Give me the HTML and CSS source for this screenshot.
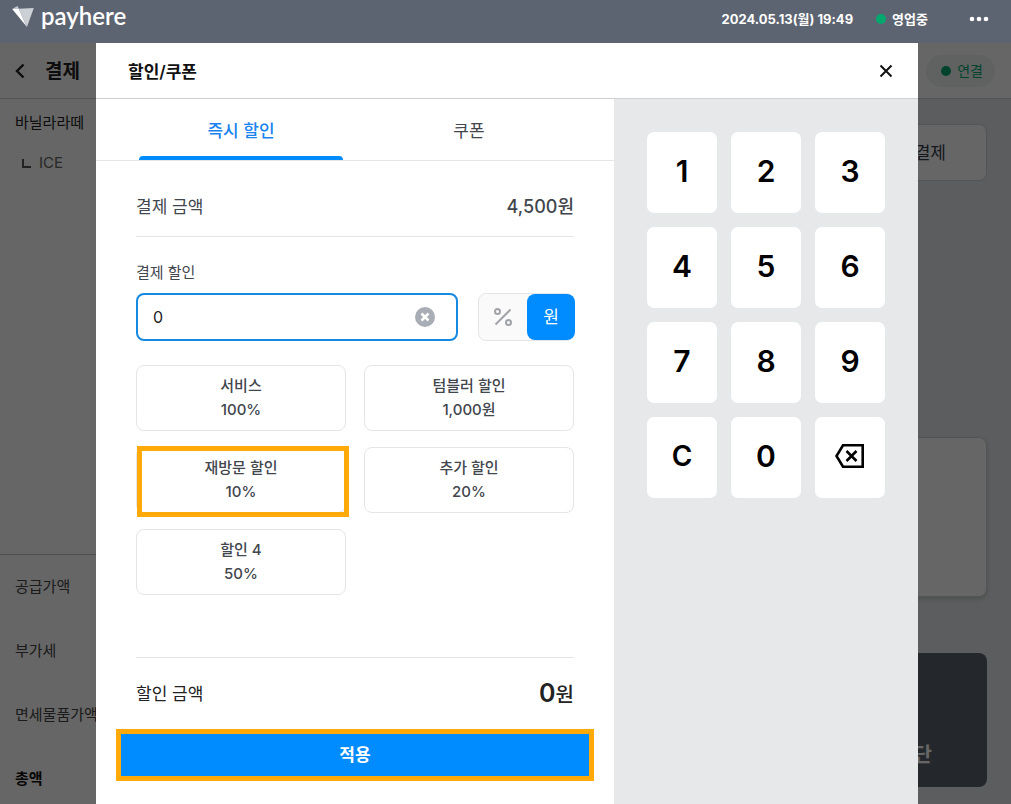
FILE: index.html
```
<!DOCTYPE html>
<html lang="ko">
<head>
    <meta charset="UTF-8">
    <meta name="viewport" content="width=device-width, initial-scale=1.0">
    <title>할인/쿠폰 - payhere</title>
    <link rel="stylesheet" href="styles.css">
</head>
<body>
    <header class="topbar">
        <div class="logo">
            <svg width="22" height="21" viewBox="0 0 66 64" aria-hidden="true">
                <path d="M0 9 16 0 21 8Z" fill="#c3c8ce"/>
                <path d="M0 9 20 8 45 64Z" fill="#fff"/>
                <path d="M20 8 66 6 45 64Z" fill="#ccd0d5"/>
            </svg>
            <span>payhere</span>
        </div>
        <div class="topbar-info">
            <span>2024.05.13(월) 19:49</span>
            <span class="status"><i class="dot"></i>영업중</span>
            <button class="icon-btn more" type="button" aria-label="더보기">
                <svg width="20" height="6" viewBox="0 0 20 6" fill="#fff">
                    <circle cx="3" cy="3" r="2.3"/>
                    <circle cx="10" cy="3" r="2.3"/>
                    <circle cx="17" cy="3" r="2.3"/>
                </svg>
            </button>
        </div>
    </header>

    <div class="stage">
        <!-- 결제 화면 -->
        <div class="page">
            <div class="page-header">
                <button class="icon-btn" type="button" aria-label="뒤로">
                    <svg width="10" height="16" viewBox="0 0 10 16" fill="none" stroke="#222" stroke-width="2.4">
                        <path d="M8.500 1.500 2 8l6.500 6.500"/>
                    </svg>
                </button>
                <h1>결제</h1>
                <span class="connect"><i class="dot"></i>연결</span>
            </div>
            <div class="page-body">
                <aside class="order">
                    <ul class="order-items">
                        <li>바닐라라떼</li>
                        <li class="option">
                            <svg width="9" height="9" viewBox="0 0 9 9" fill="none" stroke="#555" stroke-width="2">
                                <path d="M1 0v8h8"/>
                            </svg>
                            ICE
                        </li>
                    </ul>
                    <ul class="order-total">
                        <li>공급가액</li>
                        <li>부가세</li>
                        <li>면세물품가액</li>
                        <li class="sum">총액</li>
                    </ul>
                </aside>
                <main class="methods">
                    <div class="method">결제</div>
                    <div class="method method-large"></div>
                    <div class="method method-dark">단</div>
                </main>
            </div>
        </div>

        <!-- 할인/쿠폰 모달 -->
        <div class="backdrop">
            <section class="modal" role="dialog" aria-labelledby="modal-title">
                <div class="modal-header">
                    <h2 id="modal-title">할인/쿠폰</h2>
                    <button class="icon-btn" type="button" aria-label="닫기">
                        <svg width="14" height="14" viewBox="0 0 14 14" fill="none" stroke="#111" stroke-width="2">
                            <path d="M1.500 1.500l11 11M12.500 1.500l-11 11"/>
                        </svg>
                    </button>
                </div>
                <div class="modal-body">
                    <div class="discount">
                        <div class="tabs">
                            <button class="tab active" type="button">즉시 할인</button>
                            <button class="tab" type="button">쿠폰</button>
                        </div>
                        <div class="content">
                            <div class="amount-row">
                                <span>결제 금액</span>
                                <span class="amount">4,500원</span>
                            </div>
                            <label class="field-label" for="discount">결제 할인</label>
                            <div class="field-row">
                                <div class="field">
                                    <input id="discount" type="text" value="0">
                                    <button class="icon-btn" type="button" aria-label="지우기">
                                        <svg width="20" height="20" viewBox="0 0 20 20">
                                            <circle cx="10" cy="10" r="10" fill="#a9adb5"/>
                                            <path d="M6.500 6.500l7 7M13.500 6.500l-7 7" stroke="#fff" stroke-width="2.600"/>
                                        </svg>
                                    </button>
                                </div>
                                <div class="unit">
                                    <button type="button" aria-label="퍼센트">
                                        <svg width="18" height="18" viewBox="0 0 18 18" fill="none" stroke="#a0a3a8" stroke-width="2">
                                            <circle cx="3.500" cy="3.500" r="2.500"/>
                                            <circle cx="14.500" cy="14.500" r="2.500"/>
                                            <path d="M16.500 1.500l-15 15"/>
                                        </svg>
                                    </button>
                                    <button class="active" type="button">원</button>
                                </div>
                            </div>
                            <div class="presets">
                                <button class="preset" type="button">서비스<span>100%</span></button>
                                <button class="preset" type="button">텀블러 할인<span>1,000원</span></button>
                                <button class="preset marked" type="button">재방문 할인<span>10%</span></button>
                                <button class="preset" type="button">추가 할인<span>20%</span></button>
                                <button class="preset" type="button">할인 4<span>50%</span></button>
                            </div>
                        </div>
                        <div class="discount-footer">
                            <div class="total-row">
                                <span>할인 금액</span>
                                <strong>0<small>원</small></strong>
                            </div>
                            <button class="apply" type="button">적용</button>
                        </div>
                    </div>
                    <div class="keypad">
                        <button type="button">1</button>
                        <button type="button">2</button>
                        <button type="button">3</button>
                        <button type="button">4</button>
                        <button type="button">5</button>
                        <button type="button">6</button>
                        <button type="button">7</button>
                        <button type="button">8</button>
                        <button type="button">9</button>
                        <button class="clear" type="button">C</button>
                        <button type="button">0</button>
                        <button type="button" aria-label="삭제">
                            <svg width="30" height="24" viewBox="0 0 30 24" fill="none" stroke="#000" stroke-width="2.600">
                                <path d="M8 1.300H27.700V22.700H8L1.500 12Z"/>
                                <path d="M11.500 7l10 10M21.500 7l-10 10"/>
                            </svg>
                        </button>
                    </div>
                </div>
            </section>
        </div>
    </div>
</body>
</html>
```

FILE: styles.css
```
:root {
    --blue: #008cff;
    --orange: #ffaa08;
    --green: #00a870;
    --line: #e4e5e6;
    --gray-bg: #e6e8ea;
    --text: #42464d;
}

* {
    margin: 0;
    padding: 0;
    box-sizing: border-box;
}

body {
    min-height: 100vh;
    display: flex;
    flex-direction: column;
    font-family: Inter, "Noto Sans CJK KR", sans-serif;
    font-size: 15px;
    line-height: 24px;
    color: #222;
}

button,
input {
    font: inherit;
    color: inherit;
    border: none;
    background: none;
}

button {
    cursor: pointer;
}

ul {
    list-style: none;
}

svg {
    display: block;
}

.dot {
    width: 10px;
    height: 10px;
    border-radius: 50%;
    background: var(--green);
}

/* top bar */
.topbar {
    height: 43px;
    padding: 0 22px 5px 12px;
    display: flex;
    justify-content: space-between;
    align-items: center;
    background: #5d6471;
    color: #fff;
}

.logo {
    display: flex;
    align-items: center;
    gap: 7px;
    padding-bottom: 6px;
    font-family: Lato, sans-serif;
    font-size: 24px;
    font-weight: 600;
}

.topbar-info {
    display: flex;
    align-items: center;
    font-size: 13px;
    font-weight: 700;
}

.status {
    display: flex;
    align-items: center;
    gap: 6px;
    margin-left: 23px;
}

.more {
    margin-left: 41px;
}

/* payment page */
.stage {
    flex: 1;
    position: relative;
    display: flex;
}

.page {
    flex: 1;
    display: flex;
    flex-direction: column;
}

.page-header {
    height: 56px;
    padding: 0 16px 0 15px;
    display: flex;
    align-items: center;
    border-bottom: 1px solid #d4d5d8;
    background: #fff;
}

.page-header h1 {
    margin-left: 20px;
    padding-top: 2px;
    font-size: 19px;
    font-weight: 700;
}

.connect {
    margin-left: auto;
    height: 32px;
    padding: 0 12px 0 15px;
    display: flex;
    align-items: center;
    gap: 6px;
    border-radius: 16px;
    background: #eef5f2;
    color: var(--green);
    font-size: 14px;
}

.page-body {
    flex: 1;
    display: flex;
}

.order {
    width: 400px;
    display: flex;
    flex-direction: column;
    justify-content: space-between;
    background: #fff;
}

.order-items {
    padding: 4px 15px;
    line-height: 40px;
}

.option {
    display: flex;
    align-items: center;
    gap: 8px;
    padding-left: 7px;
    color: #666;
}

.order-total {
    padding: 8px 15px 1px;
    border-top: 1px solid #c4c5c8;
    line-height: 48px;
    color: #444;
}

.order-total li + li {
    padding-top: 16px;
}

.order-total .sum {
    font-weight: 700;
    color: #111;
}

.methods {
    flex: 1;
    padding: 25px 24px 17px;
    display: flex;
    flex-direction: column;
    background: var(--gray-bg);
}

.method {
    height: 57px;
    padding: 0 40px;
    display: flex;
    align-items: center;
    justify-content: flex-end;
    border: 1px solid #d0d2d5;
    border-radius: 8px;
    background: #fff;
    font-size: 17px;
    color: #333d4b;
}

.method-large {
    height: 160px;
    margin-top: auto;
    box-shadow: 0 2px 4px rgba(0, 0, 0, 0.15);
}

.method-dark {
    height: 134px;
    margin-top: 56px;
    padding: 0 55px 20px;
    align-items: flex-end;
    border: none;
    background: #5b656e;
    color: #fff;
    font-size: 20px;
    font-weight: 700;
}

/* modal */
.backdrop {
    position: absolute;
    inset: 0;
    padding: 0 93px 0 96px;
    display: flex;
    background: rgba(0, 0, 0, 0.6);
}

.modal {
    flex: 1;
    display: flex;
    flex-direction: column;
    background: #fff;
}

.modal-header {
    height: 56px;
    padding: 0 25px 0 32px;
    display: flex;
    justify-content: space-between;
    align-items: center;
    border-bottom: 1px solid #cfd0d2;
    color: #111;
}

.modal-header h2 {
    padding-top: 2px;
    font-size: 17px;
    font-weight: 600;
}

.modal-body {
    flex: 1;
    display: flex;
}

.discount {
    flex: 1;
    display: flex;
    flex-direction: column;
    color: var(--text);
}

.tabs {
    height: 62px;
    padding: 0 31px;
    display: flex;
    border-bottom: 1px solid var(--line);
}

.tab {
    flex: 1;
    position: relative;
    padding-top: 2px;
    font-size: 17px;
}

.tab.active {
    color: #1a83f0;
    font-weight: 500;
}

.tab.active::after {
    content: '';
    position: absolute;
    left: 12px;
    right: 12px;
    bottom: 0;
    height: 4px;
    border-radius: 4px 4px 0 0;
    background: var(--blue);
}

.content {
    padding: 0 40px;
}

.amount-row {
    display: flex;
    justify-content: space-between;
    padding: 30px 0 13px;
    border-bottom: 1px solid var(--line);
    font-size: 17px;
    line-height: 32px;
}

.amount {
    font-size: 18px;
    font-weight: 500;
}

.field-label {
    display: block;
    margin: 24px 0 8px;
}

.field-row {
    display: flex;
    gap: 20px;
}

.field {
    flex: 1;
    height: 48px;
    padding: 0 21px 0 15px;
    display: flex;
    align-items: center;
    border: 2px solid #1689e0;
    border-radius: 8px;
}

.field input {
    flex: 1;
    min-width: 0;
    outline: none;
    font-size: 16px;
    color: #222;
}

.unit {
    width: 96px;
    display: flex;
    border: 1px solid var(--line);
    border-radius: 8px;
    background: #fafafa;
}

.unit button {
    flex: 1;
    display: flex;
    align-items: center;
    justify-content: center;
    border-radius: 8px;
    font-size: 17px;
}

.unit .active {
    flex: 0 0 48px;
    margin-right: -2px;
    background: var(--blue);
    color: #fff;
}

.presets {
    display: grid;
    grid-template-columns: 1fr 1fr;
    gap: 16px 18px;
    margin-top: 24px;
}

.preset {
    position: relative;
    height: 66px;
    border: 1px solid var(--line);
    border-radius: 8px;
    font-weight: 500;
}

.preset span {
    display: block;
}

.marked::after {
    content: '';
    position: absolute;
    inset: -2px -4px -5px 0;
    border: 5px solid var(--orange);
}

.discount-footer {
    margin-top: auto;
    padding: 0 20px 23px;
}

.total-row {
    height: 72px;
    margin: 0 20px;
    display: flex;
    justify-content: space-between;
    align-items: center;
    border-top: 1px solid var(--line);
    font-size: 17px;
    color: #222;
}

.total-row strong {
    font-size: 25px;
    font-weight: 600;
}

.total-row small {
    font-size: 20px;
    font-weight: 500;
}

.apply {
    width: 100%;
    height: 52px;
    border: 5px solid var(--orange);
    background: var(--blue);
    color: #fff;
    font-size: 17px;
    font-weight: 700;
}

/* keypad */
.keypad {
    width: 304px;
    padding: 33px;
    display: grid;
    grid-template-columns: repeat(3, 1fr);
    grid-auto-rows: 81px;
    gap: 14px;
    background: var(--gray-bg);
}

.keypad button {
    display: flex;
    align-items: center;
    justify-content: center;
    padding-bottom: 3px;
    border-radius: 7px;
    background: #fff;
    font-size: 30px;
    font-weight: 600;
    color: #000;
}

.keypad .clear {
    font-size: 28px;
}
```
